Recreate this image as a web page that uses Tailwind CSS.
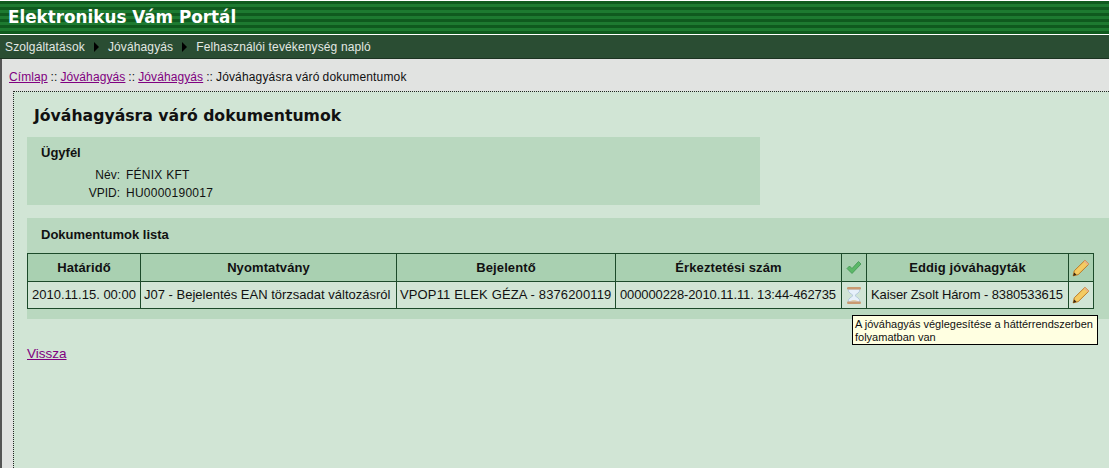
<!DOCTYPE html>
<html lang="hu">
<head>
  <meta charset="UTF-8" />
  <title>Elektronikus Vám Portál</title>
  <script src="https://cdn.jsdelivr.net/npm/@tailwindcss/browser@4"></script>
</head>
<body class="h-[468px] overflow-hidden bg-[#e1e3e1] font-['Liberation_Sans',sans-serif] text-[12px] text-[#111]">

  <!-- Fejléc -->
  <div class="border-l-2 border-[#555] h-[468px] flex flex-col">
    <div class="-ml-[2px] h-[35px] pt-[1px] bg-white">
      <div class="h-[33px] pl-[8px] leading-[32px] bg-[repeating-linear-gradient(to_bottom,#0f5a1e_0px,#0f5a1e_3px,#1d7a30_3px,#1d7a30_6px)] font-['DejaVu_Sans',sans-serif] font-bold text-[16.8px] text-white">Elektronikus Vám Portál</div>
    </div>
    <nav class="-ml-[2px] h-[24px] pl-[5px] flex items-center bg-[#2a4d33] border-b border-[#1c3322] text-[#e3e8e3] tracking-[0.13px]">
      <span>Szolgáltatások</span>
      <span class="mx-[9px] w-0 h-0 border-y-[5px] border-y-transparent border-l-[5px] border-l-black"></span>
      <span>Jóváhagyás</span>
      <span class="mx-[9px] w-0 h-0 border-y-[5px] border-y-transparent border-l-[5px] border-l-black"></span>
      <span>Felhasználói tevékenység napló</span>
    </nav>

    <!-- Morzsamenü -->
    <div class="h-[32px] pl-[7px] pt-[10px] leading-[16px] tracking-[0.1px] [word-spacing:-0.5px]">
      <a href="#" class="text-[#800080] underline">Címlap</a> :: <a href="#" class="text-[#800080] underline">Jóváhagyás</a> :: <a href="#" class="text-[#800080] underline">Jóváhagyás</a> :: <span class="tracking-[0.16px]">Jóváhagyásra váró dokumentumok</span>
    </div>

    <!-- Tartalom -->
    <main class="relative flex-1 ml-[11px] bg-[#d1e5d5] border-t border-l border-dotted border-[#222] pl-[13px]">
      <h1 class="pt-[14px] pl-[7px] h-[45px] font-['DejaVu_Sans',sans-serif] font-bold text-[15.7px] leading-[20px]">Jóváhagyásra váró dokumentumok</h1>

      <section class="w-[733px] h-[68px] bg-[#b9d8bf] pl-[14px] pt-[8px]">
        <h2 class="font-bold text-[13px] leading-[16px]">Ügyfél</h2>
        <div class="mt-[5px] grid grid-cols-[79px_1fr] gap-x-[6px] leading-[18px] tracking-[0.25px]">
          <span class="text-right tracking-normal">Név:</span><span>FÉNIX KFT</span>
          <span class="text-right tracking-normal">VPID:</span><span>HU0000190017</span>
        </div>
      </section>

      <section class="mt-[13px] -mr-px h-[101px] bg-[#b9d8bf]">
        <h2 class="pl-[14px] pt-[9px] h-[35px] font-bold text-[13px] leading-[16px]">Dokumentumok lista</h2>
        <table class="border-collapse table-fixed w-[1067px] text-center text-[13px]">
          <colgroup>
            <col class="w-[113px]" /><col class="w-[256px]" /><col class="w-[219px]" /><col class="w-[226px]" /><col class="w-[25px]" /><col class="w-[202px]" /><col class="w-[25px]" />
          </colgroup>
          <thead>
            <tr class="h-[28px] bg-[#a9d0b1] font-bold tracking-[0.1px]">
              <th class="border border-[#1c4a2a]">Határidő</th>
              <th class="border border-[#1c4a2a]">Nyomtatvány</th>
              <th class="border border-[#1c4a2a]">Bejelentő</th>
              <th class="border border-[#1c4a2a]">Érkeztetési szám</th>
              <th class="border border-[#1c4a2a]">
                <svg class="mx-auto" width="16" height="16" viewBox="0 0 16 16"><path d="M1 8.500 3.500 6l2.500 2.500 6.500-7 2.500 2.500-9 9.500z" fill="#5cb868" stroke="#3f9550" stroke-width="0.8" /></svg>
              </th>
              <th class="border border-[#1c4a2a]">Eddig jóváhagyták</th>
              <th class="border border-[#1c4a2a]">
                <svg class="mx-auto" width="18" height="18" viewBox="0 0 16 16"><path d="M1 15l1-4.500L11.500 1.200l3.500 3.300-9.500 9.400z" fill="#f4cb62" stroke="#b5701c" stroke-width="0.8" /><path d="M10.500 2.200l3.500 3.300 1-1-3.500-3.300z" fill="#e8b088" /><path d="M1 15l1-3 2 2z" fill="#3a2a14" /></svg>
              </th>
            </tr>
          </thead>
          <tbody>
            <tr class="h-[27px] bg-[#d1e5d5]">
              <td class="border border-[#1c4a2a] whitespace-nowrap">2010.11.15. 00:00</td>
              <td class="border border-[#1c4a2a] whitespace-nowrap text-left pl-[3px]">J07 - Bejelentés EAN törzsadat változásról</td>
              <td class="border border-[#1c4a2a] whitespace-nowrap text-left pl-[3px] tracking-[0.13px]">VPOP11 ELEK GÉZA - 8376200119</td>
              <td class="border border-[#1c4a2a] whitespace-nowrap text-left pl-[4px] tracking-[-0.12px]">000000228-2010.11.11. 13:44-462735</td>
              <td class="border border-[#1c4a2a]">
                <svg class="mx-auto" width="18" height="19" viewBox="0 0 18 19"><path d="M3 3h12c0 4-4 5-5 6.500 1 1.500 5 2.500 5 6.500H3c0-4 4-5 5-6.500C7 8 3 7 3 3z" fill="#e6f0fa" stroke="#a9c0d8" stroke-width="0.8" /><path d="M5 15.500c1.500-2 6.500-2 8 0z" fill="#e0d2ac" /><rect x="2" y="1" width="14" height="2.500" rx="1.200" fill="#c99a70" /><rect x="2" y="15.500" width="14" height="2.500" rx="1.200" fill="#c99a70" /></svg>
              </td>
              <td class="border border-[#1c4a2a] whitespace-nowrap text-left pl-[4px] tracking-[-0.1px]">Kaiser Zsolt Három - 8380533615</td>
              <td class="border border-[#1c4a2a]">
                <svg class="mx-auto" width="18" height="18" viewBox="0 0 16 16"><path d="M1 15l1-4.500L11.500 1.200l3.500 3.300-9.500 9.400z" fill="#f4cb62" stroke="#b5701c" stroke-width="0.8" /><path d="M10.500 2.200l3.500 3.300 1-1-3.500-3.300z" fill="#e8b088" /><path d="M1 15l1-3 2 2z" fill="#3a2a14" /></svg>
              </td>
            </tr>
          </tbody>
        </table>
      </section>

      <a href="#" class="block mt-[27px] text-[#800080] underline text-[13.5px] leading-[16px]">Vissza</a>

      <!-- Tooltip -->
      <div class="absolute left-[838px] top-[223px] w-[246px] h-[30px] border border-black bg-[#ffffe1] pl-[2px] text-[11px] leading-[13px] pt-[2px]">A jóváhagyás véglegesítése a háttérrendszerben folyamatban van</div>
    </main>
  </div>

</body>
</html>
